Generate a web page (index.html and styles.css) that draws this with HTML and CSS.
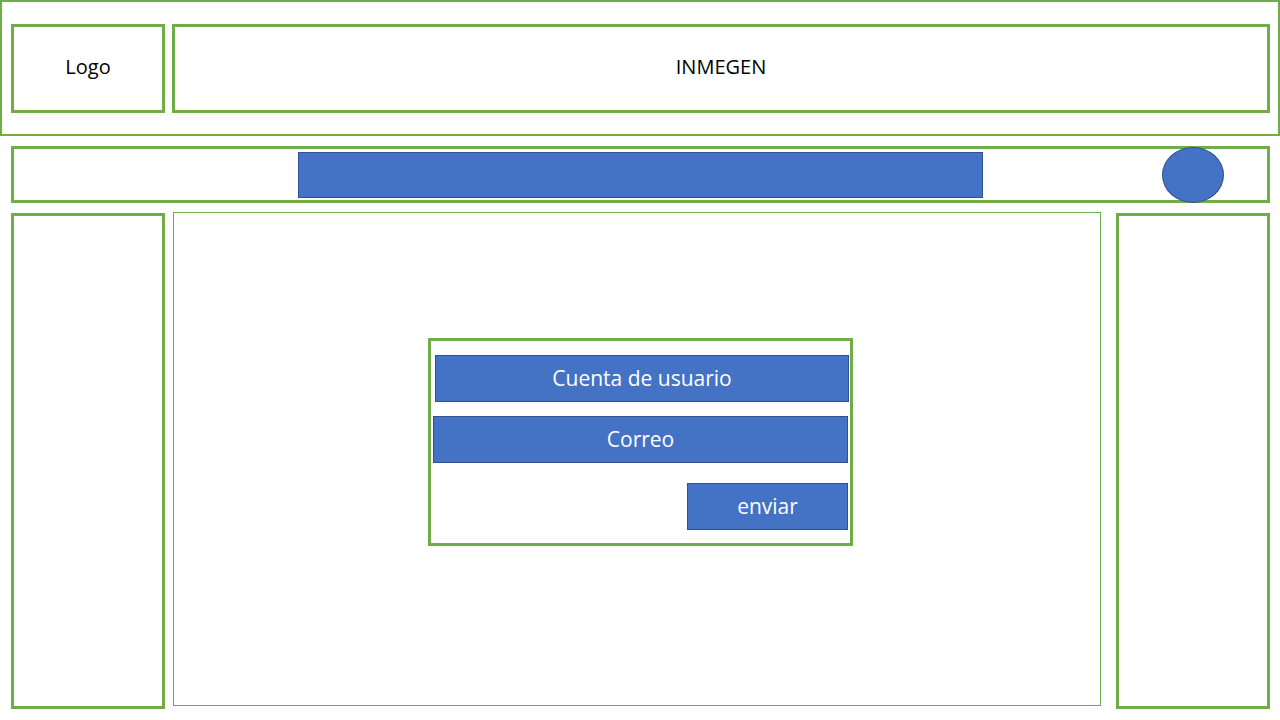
FILE: index.html
```html
<!DOCTYPE html>
<html lang="es">
<head>
<meta charset="utf-8">
<title>INMEGEN</title>
<link rel="stylesheet" href="styles.css">
</head>
<body>
<header class="header">
  <div class="box logo">Logo</div>
  <div class="box title">INMEGEN</div>
</header>
<nav class="nav">
  <div class="search"></div>
  <div class="avatar"></div>
</nav>
<div class="row">
  <aside class="box side"></aside>
  <main class="main">
    <form class="form">
      <div class="field field-user">Cuenta de usuario</div>
      <div class="field field-mail">Correo</div>
      <div class="send">enviar</div>
    </form>
  </main>
  <aside class="box side side-right"></aside>
</div>
</body>
</html>
```
FILE: styles.css
```css
* { box-sizing: border-box; }
html, body { margin: 0; padding: 0; background: #fff; }
body {
  width: 1280px;
  height: 720px;
  overflow: hidden;
  font-family: "Open Sans", "Liberation Sans", sans-serif;
  font-size: 21px;
  color: #000;
}
.box { border: 3px solid #70AD47; }
.header {
  display: flex;
  gap: 7px;
  width: 1280px;
  height: 136px;
  border: 2px solid #70AD47;
  padding: 22px 0 0 9px;
}
.logo, .title {
  height: 89px;
  padding-bottom: 4px;
  display: flex;
  align-items: center;
  justify-content: center;
  font-size: 20px;
}
.logo { width: 154px; }
.title { width: 1098px; }
.nav {
  display: flex;
  align-items: center;
  margin: 10px 0 0 11px;
  width: 1259px;
  height: 57px;
  border: 3px solid #70AD47;
  padding-left: 284px;
}
.search {
  width: 685px;
  height: 46px;
  margin-top: 1px;
  background: #4472C4;
  border: 1px solid #2F528F;
}
.avatar {
  width: 62px;
  height: 56px;
  margin-left: 179px;
  margin-top: 1px;
  border-radius: 50%;
  background: #4472C4;
  border: 1px solid #2F528F;
  flex: none;
}
.row {
  display: flex;
  align-items: flex-start;
  margin: 9px 0 0 11px;
}
.side { width: 154px; height: 496px; margin-top: 1px; }
.side-right { margin-left: 15px; }
.main {
  width: 928px;
  height: 494px;
  margin-left: 8px;
  border: 1px solid #70AD47;
  padding: 125px 0 0 254px;
}
.form {
  width: 425px;
  height: 208px;
  margin: 0;
  border: 3px solid #70AD47;
  display: flex;
  flex-direction: column;
  align-items: flex-start;
}
.field, .send {
  height: 47px;
  padding-bottom: 2px;
  background: #4472C4;
  border: 1px solid #2F528F;
  color: #fff;
  display: flex;
  align-items: center;
  justify-content: center;
}
.field-user { width: 414px; margin: 14px 0 0 4px; }
.field-mail { width: 415px; margin: 14px 0 0 2px; }
.send { width: 161px; margin: 20px 0 0 256px; }
```
